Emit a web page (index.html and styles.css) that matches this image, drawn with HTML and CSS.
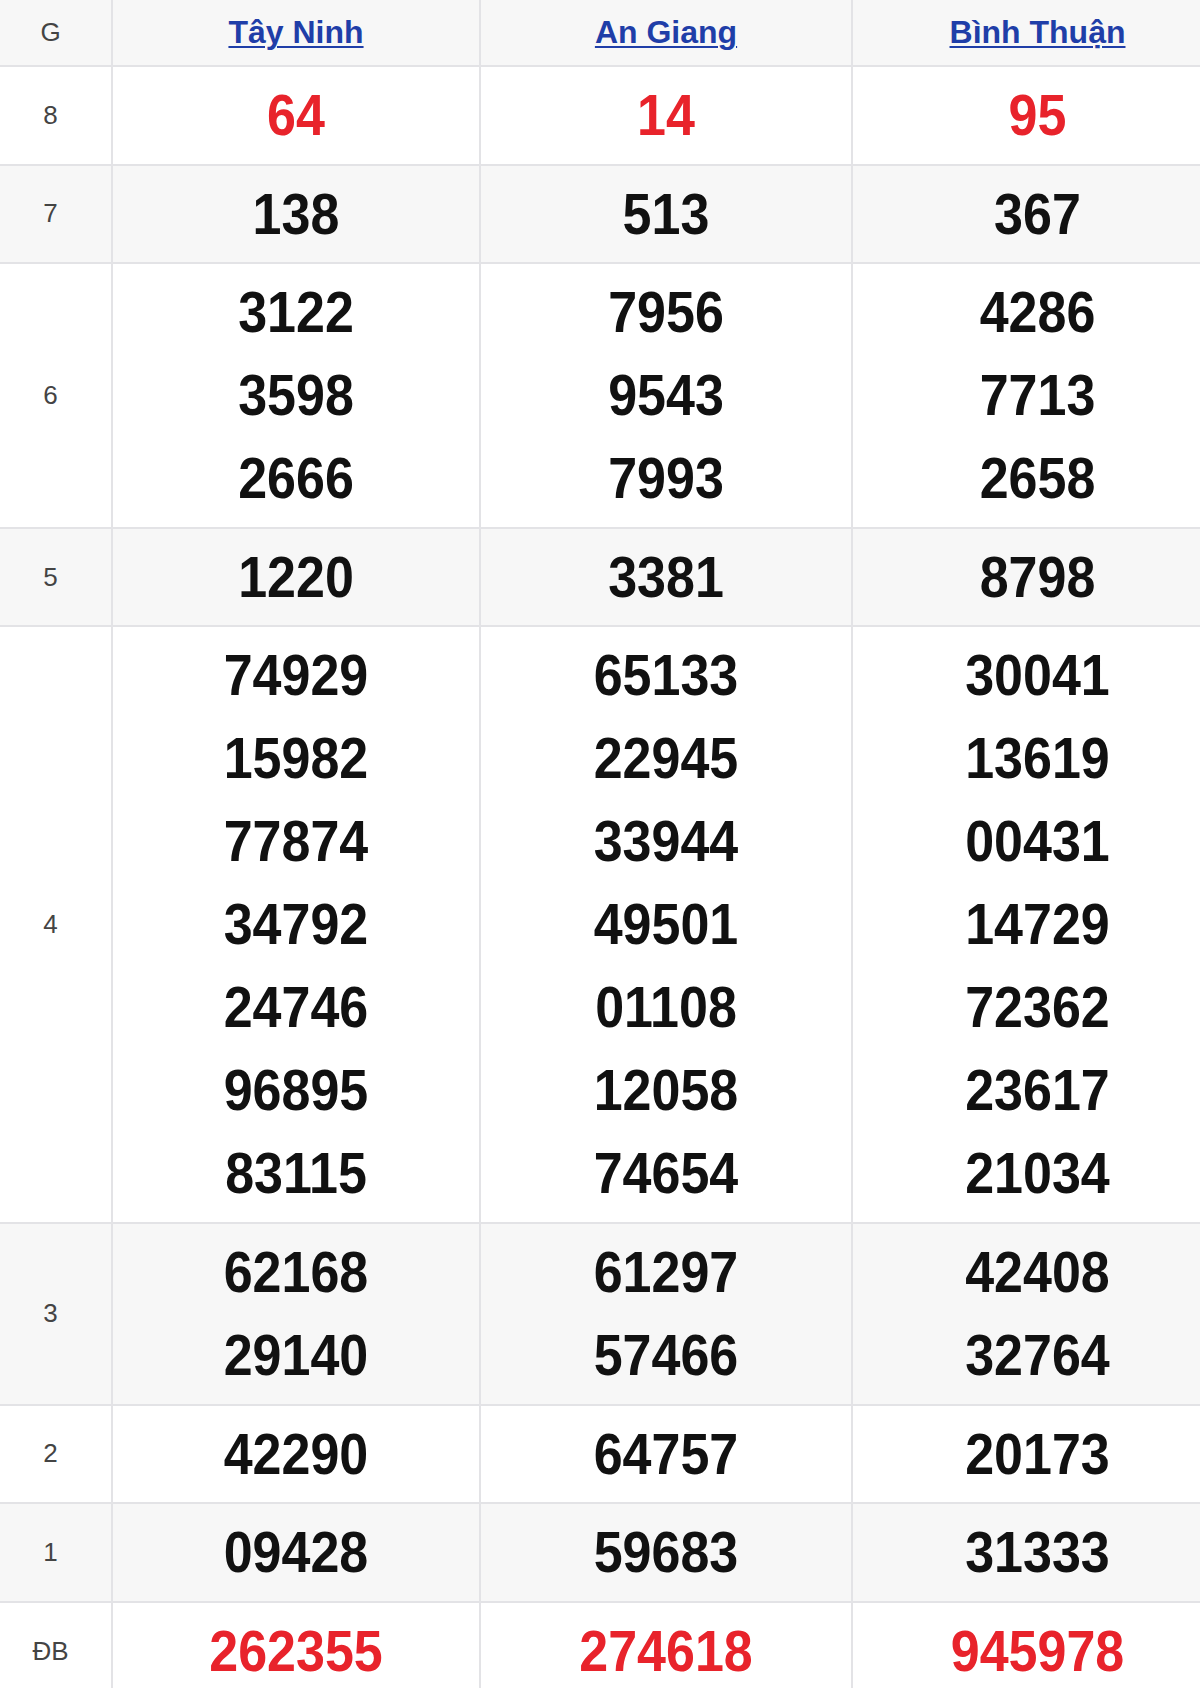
FILE: index.html
```html
<!DOCTYPE html>
<html lang="vi">
<head>
<meta charset="utf-8">
<title>Kết quả xổ số</title>
<link rel="stylesheet" href="styles.css">
</head>
<body>
<table class="kq">
  <colgroup>
    <col class="c-label">
    <col class="c-a">
    <col class="c-b">
    <col class="c-c">
  </colgroup>
  <thead>
    <tr class="alt">
      <th class="label">G</th>
      <th><a href="#" class="prov">Tây Ninh</a></th>
      <th><a href="#" class="prov">An Giang</a></th>
      <th><a href="#" class="prov">Bình Thuận</a></th>
    </tr>
  </thead>
  <tbody>
    <tr>
      <td class="label">8</td>
      <td class="num red"><div>64</div></td>
      <td class="num red"><div>14</div></td>
      <td class="num red"><div>95</div></td>
    </tr>
    <tr class="alt">
      <td class="label">7</td>
      <td class="num"><div>138</div></td>
      <td class="num"><div>513</div></td>
      <td class="num"><div>367</div></td>
    </tr>
    <tr>
      <td class="label">6</td>
      <td class="num"><div>3122</div><div>3598</div><div>2666</div></td>
      <td class="num"><div>7956</div><div>9543</div><div>7993</div></td>
      <td class="num"><div>4286</div><div>7713</div><div>2658</div></td>
    </tr>
    <tr class="alt">
      <td class="label">5</td>
      <td class="num"><div>1220</div></td>
      <td class="num"><div>3381</div></td>
      <td class="num"><div>8798</div></td>
    </tr>
    <tr>
      <td class="label">4</td>
      <td class="num"><div>74929</div><div>15982</div><div>77874</div><div>34792</div><div>24746</div><div>96895</div><div>83115</div></td>
      <td class="num"><div>65133</div><div>22945</div><div>33944</div><div>49501</div><div>01108</div><div>12058</div><div>74654</div></td>
      <td class="num"><div>30041</div><div>13619</div><div>00431</div><div>14729</div><div>72362</div><div>23617</div><div>21034</div></td>
    </tr>
    <tr class="alt">
      <td class="label">3</td>
      <td class="num"><div>62168</div><div>29140</div></td>
      <td class="num"><div>61297</div><div>57466</div></td>
      <td class="num"><div>42408</div><div>32764</div></td>
    </tr>
    <tr>
      <td class="label">2</td>
      <td class="num"><div>42290</div></td>
      <td class="num"><div>64757</div></td>
      <td class="num"><div>20173</div></td>
    </tr>
    <tr class="alt">
      <td class="label">1</td>
      <td class="num"><div>09428</div></td>
      <td class="num"><div>59683</div></td>
      <td class="num"><div>31333</div></td>
    </tr>
    <tr>
      <td class="label">ĐB</td>
      <td class="num red"><div>262355</div></td>
      <td class="num red"><div>274618</div></td>
      <td class="num red"><div>945978</div></td>
    </tr>
  </tbody>
</table>
</body>
</html>
```
FILE: styles.css
```css
html, body {
  margin: 0;
  padding: 0;
  background: #ffffff;
  overflow: hidden;
}

body {
  font-family: "Liberation Sans", Arial, sans-serif;
  width: 1200px;
}

.kq {
  border-collapse: collapse;
  table-layout: fixed;
  width: 1230px;
  margin-left: -8px;
}

.c-label { width: 119px; }
.c-a { width: 368px; }
.c-b { width: 372px; }
.c-c { width: 371px; }

.kq th,
.kq td {
  border: 2px solid #e3e3e6;
  text-align: center;
  vertical-align: middle;
  padding: 0;
}

.kq thead th {
  height: 65px;
  border-top: none;
}

.alt {
  background: #f7f7f7;
}

.label {
  font-size: 26px;
  font-weight: normal;
  color: #444444;
  padding-right: 4px !important;
}

.prov {
  font-size: 32px;
  font-weight: bold;
  color: #1f3ea8;
  text-decoration: underline;
  text-decoration-thickness: 2px;
  text-underline-offset: 3px;
}

.num {
  padding: 7px 0 6.6px !important;
  font-size: 52px;
  font-weight: bold;
  color: #111111;
}

.num div {
  line-height: 83px;
  height: 83px;
  transform: scaleY(1.1);
}

.red {
  color: #e8232b;
}
```
